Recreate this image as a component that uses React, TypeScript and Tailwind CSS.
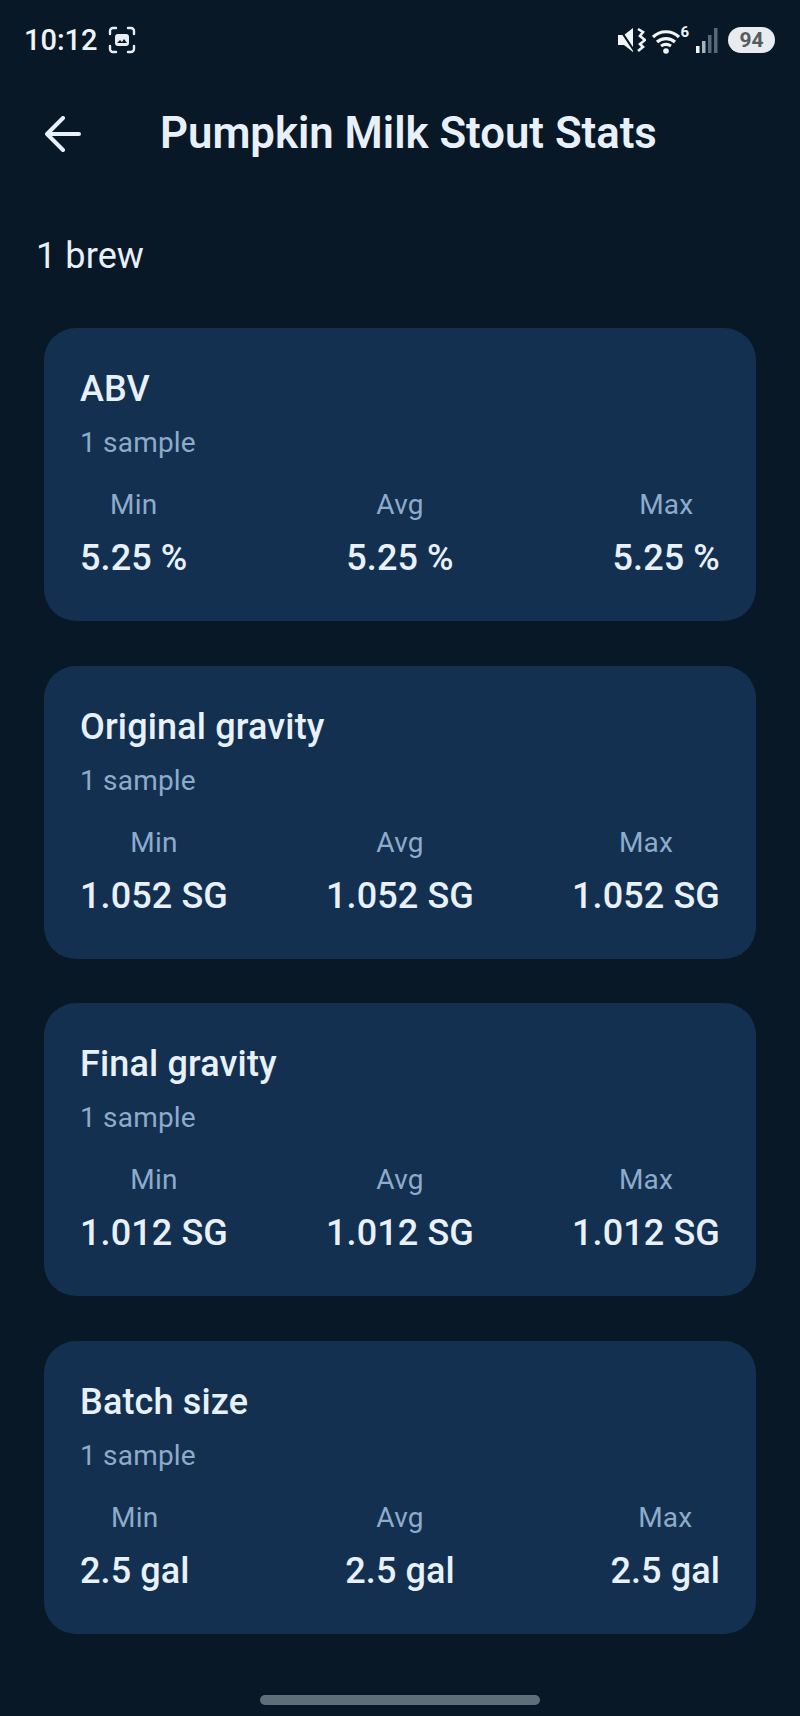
const cards = [
  { title: "ABV", value: "5.25 %" },
  { title: "Original gravity", value: "1.052 SG" },
  { title: "Final gravity", value: "1.012 SG" },
  { title: "Batch size", value: "2.5 gal" },
];

function StatColumn({ label, value }: { label: string; value: string }) {
  return (
    <div className="flex flex-col items-center">
      <span className="text-[28px] leading-[36px] tracking-[0.2px] text-[#8dabcb]">{label}</span>
      <span className="mt-[17px] text-[36px] leading-[36px] font-medium tracking-[0.1px] text-[#e8f1fb]">{value}</span>
    </div>
  );
}

function StatusBar() {
  return (
    <div className="flex h-[80px] items-center justify-between pr-[25px] pl-[24px]">
      <div className="flex items-center gap-[10px]">
        <span className="text-[29px] leading-none font-medium text-[#eef3f8]">10:12</span>
        <svg width="28" height="28" viewBox="0 0 28 28" fill="none" stroke="#e8eef4" strokeWidth="2.4" strokeLinecap="round">
          <path d="M2 8V5a3 3 0 0 1 3-3h3M20 2h3a3 3 0 0 1 3 3v3M26 20v3a3 3 0 0 1-3 3h-3M8 26H5a3 3 0 0 1-3-3v-3" />
          <rect x="7" y="8" width="14" height="12" rx="3" fill="#e8eef4" stroke="none" />
          <path d="M9 17l3-3 2 2 2-3 3 4z" fill="#081826" stroke="none" />
        </svg>
      </div>
      <div className="flex items-center">
        <svg width="28" height="28" viewBox="0 0 28 28" className="mr-[6px]">
          <path d="M0 9h6l9-7v24l-9-7H0z" fill="#f2f5f8" />
          <path d="M1 2l16 24" stroke="#081826" strokeWidth="2.200" />
          <path d="M20 3l5 3-3 4 5 4-5 4 3 3-5 4" fill="none" stroke="#f2f5f8" strokeWidth="2.600" />
        </svg>
        <div className="relative mr-[7px] h-[28px] w-[36px]">
          <svg width="28" height="28" viewBox="0 0 28 28" fill="none" stroke="#f2f5f8" strokeWidth="3.200">
            <path d="M1 11c7-7 19-7 26 0M5 16c5-4.500 13-4.500 18 0M9 20c3-2 7-2 10 0" />
            <circle cx="14" cy="25" r="2.800" fill="#f2f5f8" stroke="none" />
          </svg>
          <span className="absolute top-[-1px] right-[-1px] text-[15px] leading-none font-bold text-[#f2f5f8]">6</span>
        </div>
        <svg width="26" height="28" viewBox="0 0 26 28" className="mr-[7px]">
          <rect x="1" y="20" width="3.500" height="7" fill="#f2f5f8" />
          <rect x="7" y="15" width="3.500" height="12" fill="#a9b2bb" />
          <rect x="13" y="9" width="3.500" height="18" fill="#59677a" />
          <rect x="19" y="2" width="3.500" height="25" fill="#59677a" />
        </svg>
        <div className="flex h-[26px] w-[47px] items-center justify-center rounded-[13px] bg-[#e9ecef] text-[21px] leading-none font-bold text-[#555b61]">
          94
        </div>
      </div>
    </div>
  );
}

export default function App() {
  return (
    <div className="relative h-[1716px] w-[800px] overflow-hidden bg-[#081826] font-['Roboto',sans-serif]">
      <StatusBar />
      <header className="mt-[22px] flex h-[64px] items-center pl-[45px]">
        <svg width="36" height="36" viewBox="0 0 36 36" fill="none" stroke="#e8f1fb" strokeWidth="4" strokeLinecap="round" strokeLinejoin="round">
          <path d="M34 18H2M18 2L2 18l16 16" />
        </svg>
        <h1 className="ml-[79px] text-[43.7px] leading-none font-semibold text-[#e8f1fb]">Pumpkin Milk Stout Stats</h1>
      </header>
      <p className="mt-[70px] pl-[36px] text-[36px] leading-[40px] font-[450] tracking-[0.1px] text-[#e8f1fb]">1 brew</p>
      <main className="mt-[52px] flex flex-col gap-[44.67px] px-[44px]">
        {cards.map((card) => (
          <section key={card.title} className="h-[293px] rounded-[32px] bg-[#133050] px-[36px] pt-[39px]">
            <h2 className="text-[36px] leading-[44px] font-medium tracking-[0.15px] text-[#e8f1fb]">{card.title}</h2>
            <p className="mt-[14px] text-[28px] leading-[36px] tracking-[0.2px] text-[#8dabcb]">1 sample</p>
            <div className="mt-[26px] flex justify-between">
              <StatColumn label="Min" value={card.value} />
              <StatColumn label="Avg" value={card.value} />
              <StatColumn label="Max" value={card.value} />
            </div>
          </section>
        ))}
      </main>
      <div className="absolute bottom-[11px] left-[260px] h-[10px] w-[280px] rounded-full bg-[#5f6f79]" />
    </div>
  );
}
